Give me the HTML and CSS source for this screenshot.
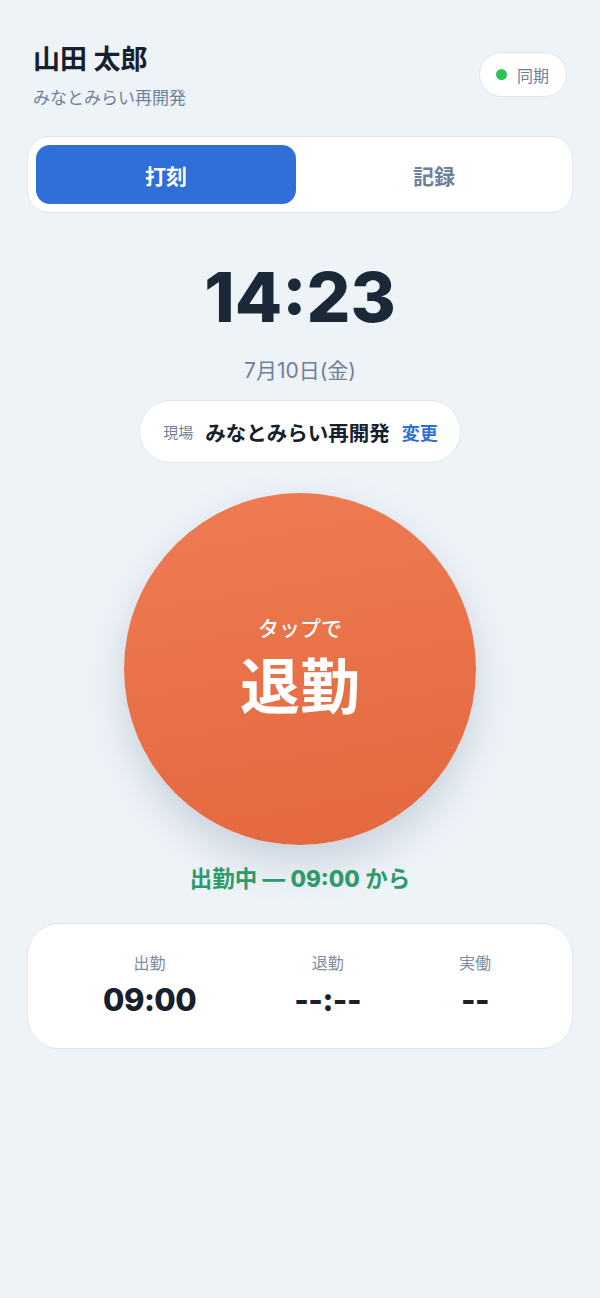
FILE: index.html
```html
<!DOCTYPE html>
<html lang="ja">
<head>
<meta charset="utf-8">
<link rel="stylesheet" href="styles.css">
</head>
<body>
<div class="app">
  <header class="top">
    <div class="who">
      <div class="name">山田 太郎</div>
      <div class="proj">みなとみらい再開発</div>
    </div>
    <div class="sync"><span class="dot"></span><span>同期</span></div>
  </header>

  <nav class="tabs">
    <div class="tab active">打刻</div>
    <div class="tab">記録</div>
  </nav>

  <section class="clock">
    <div class="time">14:23</div>
    <div class="date">7月10日(金)</div>
    <div class="site">
      <span class="site-label">現場</span>
      <span class="site-name">みなとみらい再開発</span>
      <span class="site-change">変更</span>
    </div>
  </section>

  <div class="punch-wrap">
    <button class="punch">
      <span class="punch-sub">タップで</span>
      <span class="punch-main">退勤</span>
    </button>
  </div>

  <div class="status">出勤中 — <span class="num">09:00</span> から</div>

  <section class="summary">
    <div class="cell">
      <div class="label">出勤</div>
      <div class="value">09:00</div>
    </div>
    <div class="cell">
      <div class="label">退勤</div>
      <div class="value">--:--</div>
    </div>
    <div class="cell">
      <div class="label">実働</div>
      <div class="value">--</div>
    </div>
  </section>
</div>
</body>
</html>
```

FILE: styles.css
```css
* { box-sizing: border-box; }
html, body { margin: 0; padding: 0; }
body {
  background: #eef3f8;
  font-family: Inter, "Noto Sans CJK JP", sans-serif;
  color: #1b2838;
}
.app {
  width: 600px;
  min-height: 1298px;
  padding: 40px 27px 40px 27px;
}
.top {
  display: flex;
  justify-content: space-between;
  align-items: flex-start;
  padding: 0 6px 0 6px;
}
.name {
  font-size: 27px;
  font-weight: 700;
  line-height: 40px;
  color: #17212e;
}
.proj {
  margin-top: 6px;
  font-size: 17px;
  line-height: 24px;
  color: #6e819a;
}
.sync {
  margin-top: 12px;
  margin-right: 0;
  height: 45px;
  padding: 0 17px 0 16px;
  border-radius: 23px;
  background: #fff;
  border: 1.5px solid #dfe6ef;
  display: flex;
  align-items: center;
  gap: 10px;
  font-size: 16px;
  color: #6e819a;
}
.dot {
  width: 11px; height: 11px;
  border-radius: 50%;
  background: #2fc355;
}
.tabs {
  margin-top: 26px;
  height: 77px;
  background: #fff;
  border: 1.5px solid #dfe6ef;
  border-radius: 22px;
  padding: 8px;
  display: grid;
  grid-template-columns: 1fr 1fr;
  gap: 8px;
}
.tab {
  display: flex;
  align-items: center;
  justify-content: center;
  font-size: 21px;
  font-weight: 700;
  color: #6e819a;
  border-radius: 14px;
}
.tab.active {
  background: #2f6fd7;
  color: #fff;
}
.clock {
  display: flex;
  flex-direction: column;
  align-items: center;
}
.time {
  margin-top: 34px;
  font-size: 69px;
  font-weight: 800;
  line-height: 100px;
  color: #1b2838;
}
.date {
  margin-top: 9px;
  font-size: 21px;
  line-height: 30px;
  color: #6e819a;
}
.site {
  margin-top: 14px;
  height: 63px;
  padding: 0 22px 0 23px;
  background: #fff;
  border: 1.5px solid #dfe6ef;
  border-radius: 32px;
  display: flex;
  align-items: center;
}
.site-label {
  font-size: 15px;
  color: #6e819a;
  margin-right: 12px;
}
.site-name {
  font-size: 20.5px;
  font-weight: 700;
  color: #17212e;
  margin-right: 12px;
}
.site-change {
  font-size: 18px;
  font-weight: 700;
  color: #2f6fd7;
}
.punch-wrap {
  display: flex;
  justify-content: center;
  margin-top: 30px;
}
.punch {
  width: 352px;
  height: 352px;
  border-radius: 50%;
  border: none;
  background: linear-gradient(170deg, #ef7c53 0%, #e3673d 100%);
  box-shadow: 0 18px 40px rgba(70, 90, 120, 0.22);
  display: flex;
  flex-direction: column;
  align-items: center;
  justify-content: center;
  color: #fff;
  font-family: inherit;
  padding: 0;
}
.punch-sub {
  font-size: 21px;
  font-weight: 500;
  line-height: 28px;
  margin-top: 4px;
}
.punch-main {
  font-size: 60px;
  font-weight: 700;
  line-height: 80px;
  margin-top: 4px;
}
.status {
  margin-top: 17px;
  text-align: center;
  font-size: 22.5px;
  font-weight: 700;
  line-height: 34px;
  color: #2e9a6a;
}
.status .num { font-weight: 800; }
.summary {
  margin-top: 27px;
  height: 126px;
  background: #fff;
  border: 1.5px solid #dfe6ef;
  border-radius: 32px;
  display: flex;
  justify-content: space-around;
  align-items: center;
  padding: 0 32px 0 26px;
}
.cell {
  display: flex;
  flex-direction: column;
  align-items: center;
}
.label {
  font-size: 16px;
  line-height: 22px;
  color: #7c8ea6;
}
.value {
  margin-top: 5px;
  font-size: 31px;
  font-weight: 800;
  line-height: 42px;
  letter-spacing: -0.5px;
  color: #17212e;
}
```
